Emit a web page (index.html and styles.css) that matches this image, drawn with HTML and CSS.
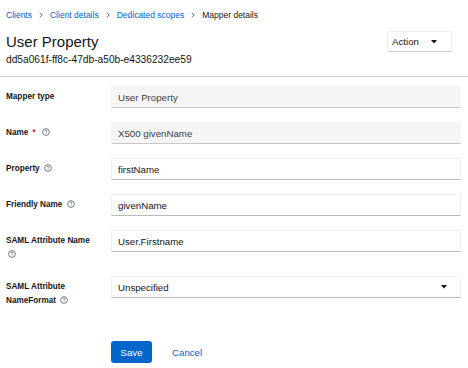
FILE: index.html
```html
<!DOCTYPE html>
<html lang="en">
<head>
    <meta charset="UTF-8">
    <meta name="viewport" content="width=device-width, initial-scale=1.0">
    <title>Mapper details</title>
    <link rel="stylesheet" href="styles.css">
</head>
<body>
    <div class="header">
        <nav class="crumbs">
            <a href="#">Clients</a>
            <svg class="chev" width="4" height="6" viewBox="0 0 4 6"><path d="M0.7 0.6 L3.2 3 L0.7 5.4" fill="none" stroke="#6a6e73" stroke-width="1"/></svg>
            <a href="#">Client details</a>
            <svg class="chev" width="4" height="6" viewBox="0 0 4 6"><path d="M0.7 0.6 L3.2 3 L0.7 5.4" fill="none" stroke="#6a6e73" stroke-width="1"/></svg>
            <a href="#">Dedicated scopes</a>
            <svg class="chev" width="4" height="6" viewBox="0 0 4 6"><path d="M0.7 0.6 L3.2 3 L0.7 5.4" fill="none" stroke="#6a6e73" stroke-width="1"/></svg>
            <span class="current">Mapper details</span>
        </nav>
        <div class="title-row">
            <div>
                <h1>User Property</h1>
                <div class="uuid">dd5a061f-ff8c-47db-a50b-e4336232ee59</div>
            </div>
            <button class="action" type="button">
                Action
                <svg width="6" height="4" viewBox="0 0 6 4"><path d="M0 0 H6 L3 3.5 Z" fill="#151515"/></svg>
            </button>
        </div>
    </div>
    <div class="divider"></div>

    <form class="form">
        <label class="lbl">Mapper type</label>
        <input class="field readonly" type="text" value="User Property" readonly>

        <label class="lbl">Name <span class="req">*</span> <svg class="help" width="8" height="8" viewBox="0 0 8 8"><circle cx="4" cy="4" r="3.4" fill="none" stroke="#6a6e73" stroke-width="0.9"/><path d="M2.9 3.1 C2.9 2.4 3.4 2.1 4 2.1 C4.6 2.1 5.1 2.5 5.1 3 C5.1 3.7 4.1 3.8 4.1 4.6" fill="none" stroke="#6a6e73" stroke-width="0.8"/><circle cx="4.1" cy="5.8" r="0.45" fill="#6a6e73"/></svg></label>
        <input class="field readonly" type="text" value="X500 givenName" readonly>

        <label class="lbl">Property <svg class="help" width="8" height="8" viewBox="0 0 8 8"><circle cx="4" cy="4" r="3.4" fill="none" stroke="#6a6e73" stroke-width="0.9"/><path d="M2.9 3.1 C2.9 2.4 3.4 2.1 4 2.1 C4.6 2.1 5.1 2.5 5.1 3 C5.1 3.7 4.1 3.8 4.1 4.6" fill="none" stroke="#6a6e73" stroke-width="0.8"/><circle cx="4.1" cy="5.8" r="0.45" fill="#6a6e73"/></svg></label>
        <input class="field" type="text" value="firstName">

        <label class="lbl">Friendly Name <svg class="help" width="8" height="8" viewBox="0 0 8 8"><circle cx="4" cy="4" r="3.4" fill="none" stroke="#6a6e73" stroke-width="0.9"/><path d="M2.9 3.1 C2.9 2.4 3.4 2.1 4 2.1 C4.6 2.1 5.1 2.5 5.1 3 C5.1 3.7 4.1 3.8 4.1 4.6" fill="none" stroke="#6a6e73" stroke-width="0.8"/><circle cx="4.1" cy="5.8" r="0.45" fill="#6a6e73"/></svg></label>
        <input class="field" type="text" value="givenName">

        <label class="lbl">SAML Attribute Name <svg class="help" width="8" height="8" viewBox="0 0 8 8"><circle cx="4" cy="4" r="3.4" fill="none" stroke="#6a6e73" stroke-width="0.9"/><path d="M2.9 3.1 C2.9 2.4 3.4 2.1 4 2.1 C4.6 2.1 5.1 2.5 5.1 3 C5.1 3.7 4.1 3.8 4.1 4.6" fill="none" stroke="#6a6e73" stroke-width="0.8"/><circle cx="4.1" cy="5.8" r="0.45" fill="#6a6e73"/></svg></label>
        <input class="field" type="text" value="User.Firstname">

        <label class="lbl">SAML Attribute NameFormat <svg class="help" width="8" height="8" viewBox="0 0 8 8"><circle cx="4" cy="4" r="3.4" fill="none" stroke="#6a6e73" stroke-width="0.9"/><path d="M2.9 3.1 C2.9 2.4 3.4 2.1 4 2.1 C4.6 2.1 5.1 2.5 5.1 3 C5.1 3.7 4.1 3.8 4.1 4.6" fill="none" stroke="#6a6e73" stroke-width="0.8"/><circle cx="4.1" cy="5.8" r="0.45" fill="#6a6e73"/></svg></label>
        <div class="field select">
            <span>Unspecified</span>
            <svg width="6" height="4" viewBox="0 0 6 4"><path d="M0 0 H6 L3 3.5 Z" fill="#151515"/></svg>
        </div>

        <div class="buttons">
            <button class="save" type="submit">Save</button>
            <a class="cancel" href="#">Cancel</a>
        </div>
    </form>
</body>
</html>
```

FILE: styles.css
```css
body {
    margin: 0;
    font-family: "Liberation Sans", Arial, sans-serif;
    color: #151515;
    background: #fff;
}
.header {
    padding: 0 16px 0 6px;
}
.crumbs {
    display: flex;
    align-items: center;
    gap: 7px;
    margin-top: 9px;
    height: 12px;
    font-size: 8.5px;
    line-height: 12px;
}
.crumbs a {
    color: #0066cc;
    text-decoration: none;
}
.crumbs .current {
    color: #151515;
}
.title-row {
    display: flex;
    justify-content: space-between;
    align-items: flex-start;
    margin-top: 10px;
}
h1 {
    margin: 0;
    padding-top: 2px;
    font-size: 15px;
    font-weight: normal;
    line-height: 18px;
}
.uuid {
    margin-top: 2px;
    font-size: 10.2px;
    line-height: 14px;
}
.action {
    display: flex;
    align-items: center;
    gap: 12px;
    height: 21px;
    padding: 0 14px 0 4px;
    font-family: inherit;
    font-size: 9.7px;
    color: #151515;
    background: #fff;
    border: 1px solid #f0f0f0;
    border-bottom-color: #d2d2d2;
}
.divider {
    margin-top: 9px;
    height: 1px;
    background: #d2d2d2;
}
.form {
    display: grid;
    grid-template-columns: 105px 350px;
    row-gap: 14px;
    padding: 9px 0 0 6px;
}
.lbl {
    padding: 4px 12px 0 0;
    font-size: 8.2px;
    font-weight: bold;
    line-height: 14px;
}
.req {
    color: #c9190b;
    margin: 0 2px;
}
.help {
    vertical-align: -1px;
    margin-left: 2px;
}
.field {
    box-sizing: border-box;
    height: 22px;
    padding: 0 6px;
    font-family: inherit;
    font-size: 9.7px;
    color: #151515;
    background: #fff;
    border: 1px solid #f0f0f0;
    border-bottom-color: #b8bbbe;
    outline: none;
}
.field.readonly {
    background: #f5f5f5;
    color: #3c3f42;
    border-color: #f5f5f5;
    border-bottom-color: #c7c7c7;
}
.select {
    display: flex;
    align-items: center;
    justify-content: space-between;
    padding-right: 13px;
}
.buttons {
    grid-column: 2;
    display: flex;
    align-items: center;
    gap: 20px;
    margin-top: 19px;
}
.save {
    width: 41px;
    height: 22px;
    padding: 0;
    font-family: inherit;
    font-size: 9.7px;
    color: #fff;
    background: #0066cc;
    border: none;
    border-radius: 3px;
}
.cancel {
    font-size: 9.7px;
    color: #0066cc;
    text-decoration: none;
}
```
